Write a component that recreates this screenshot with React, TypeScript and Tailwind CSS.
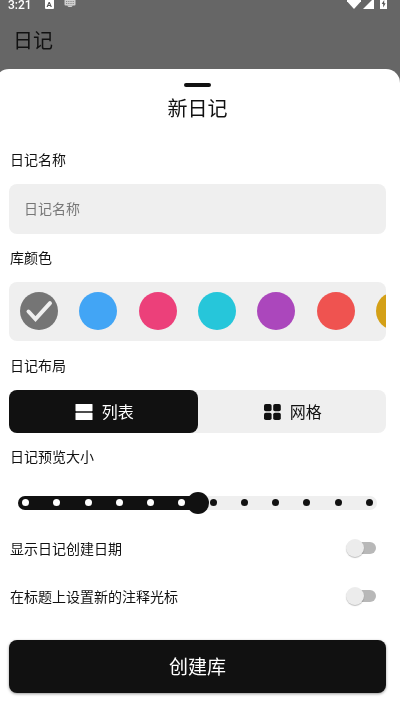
import React, { useState } from "react";

interface IColor {
  name: string;
  style: string;
}

const colors: IColor[] = [
  { name: "灰色", style: "bg-[#757575]" },
  { name: "蓝色", style: "bg-[#42a5f5]" },
  { name: "粉色", style: "bg-[#ec407a]" },
  { name: "青色", style: "bg-[#26c6da]" },
  { name: "紫色", style: "bg-[#ab47bc]" },
  { name: "红色", style: "bg-[#ef5350]" },
  { name: "琥珀色", style: "bg-[#d4a017]" },
];

const SLIDER_MAX = 11;

const StatusBar = () => {
  return (
    <div className="flex h-[10px] items-start justify-between pl-2 pr-[13px] text-white">
      <div className="flex items-start">
        <span className="font-[Roboto,sans-serif] text-xs font-medium leading-[11px]">
          3:21
        </span>
        <span className="ml-[13px] flex h-[9px] w-[9px] items-center justify-center rounded-b-[1px] bg-white font-[Roboto,sans-serif] text-[8px] font-bold leading-none text-[#555555]">
          A
        </span>
        <svg className="ml-[10px]" width="12" height="8" viewBox="0 0 12 8">
          <rect x="0.5" y="-1" width="11" height="6.5" rx="1" fill="#d0d0d0" />
          <path
            d="M2 1.5h8M2 3.5h8"
            stroke="#777777"
            strokeWidth="0.8"
            strokeDasharray="1 0.8"
          />
          <path d="M3 5.5h6l-1.5 1.5h-3z" fill="#d0d0d0" />
        </svg>
      </div>
      <div className="flex items-start">
        <svg width="14" height="9" viewBox="0 0 14 9" fill="white">
          <path d="M0 1.2V0h14v1.2L7 9z" />
        </svg>
        <svg className="ml-[2px]" width="11" height="9" viewBox="0 0 11 9" fill="white">
          <path d="M11 -2v11H0z" />
        </svg>
        <svg className="ml-[6px]" width="7" height="9" viewBox="0 0 7 9">
          <path d="M0 0h7v9H0z" fill="white" />
          <path d="M4.2 0L1.7 4h1.5v3.4l2.4-4.2H4.2z" fill="#555555" />
        </svg>
      </div>
    </div>
  );
};

const ListIcon = () => (
  <svg width="18" height="16" viewBox="0 0 18 16" fill="currentColor">
    <rect x="0.5" width="17" height="7.2" rx="0.6" />
    <rect x="0.5" y="8.8" width="17" height="7.2" rx="0.6" />
  </svg>
);

const GridIcon = () => (
  <svg width="17" height="16" viewBox="0 0 17 16" fill="currentColor">
    <rect width="7.6" height="7.2" rx="1.8" />
    <rect x="9.2" width="7.6" height="7.2" rx="1.8" />
    <rect y="8.8" width="7.6" height="7.2" rx="1.8" />
    <rect x="9.2" y="8.8" width="7.6" height="7.2" rx="1.8" />
  </svg>
);

const ColorPicker = () => {
  const [selected, setSelected] = useState(0);

  return (
    <fieldset className="min-w-0">
      <legend className="flex h-12 items-center pb-[2px] pl-px text-sm">库颜色</legend>
      <div className="overflow-x-auto rounded-lg bg-[#efefef] pb-[11px] pl-[11px] pt-[10px] [scrollbar-width:none]">
        <div className="flex w-[394px] justify-between">
          {colors.map((color, i) => (
            <label key={color.name} className="relative block size-[38px]">
              <input
                type="radio"
                name="color"
                aria-label={color.name}
                checked={selected === i}
                onChange={() => setSelected(i)}
                className={`block size-[38px] appearance-none rounded-full ${color.style}`}
              />
              {selected === i && (
                <svg
                  className="pointer-events-none absolute inset-0"
                  viewBox="0 0 38 38"
                  fill="none"
                >
                  <path
                    d="M8.5 19.5l7 7.5L30 11.2"
                    stroke="#efefef"
                    strokeWidth="4"
                    strokeLinecap="round"
                  />
                </svg>
              )}
            </label>
          ))}
        </div>
      </div>
    </fieldset>
  );
};

const LayoutTabs = () => {
  const [layout, setLayout] = useState("list");
  const tab = "flex h-[43px] items-center justify-center gap-[9px] rounded-lg pl-[2px] text-base";

  return (
    <div className="grid grid-cols-2 rounded-lg bg-[#efefef]">
      <button
        type="button"
        onClick={() => setLayout("list")}
        className={`${tab} ${layout === "list" ? "bg-[#111111] text-white" : ""}`}
      >
        <ListIcon />
        <span className="pb-[2px]">列表</span>
      </button>
      <button
        type="button"
        onClick={() => setLayout("grid")}
        className={`${tab} ${layout === "grid" ? "bg-[#111111] text-white" : ""}`}
      >
        <GridIcon />
        <span className="pb-[2px]">网格</span>
      </button>
    </div>
  );
};

const SizeSlider = () => {
  const [size, setSize] = useState(5.5);
  const dots = Array.from({ length: SLIDER_MAX + 1 }, (_, i) => i);

  return (
    <div className="flex h-[43px] items-center px-[9px]">
      <div className="relative h-[14px] w-full rounded-full bg-[#efefef]">
        <div
          className="h-full rounded-full bg-[#111111]"
          style={{ width: `${(size / SLIDER_MAX) * 100}%` }}
        />
        <div className="absolute inset-0 flex items-center justify-between px-1">
          {dots.map((dot) => (
            <span
              key={dot}
              className={`size-[7px] rounded-full ${dot < size ? "bg-white" : "bg-[#111111]"}`}
            />
          ))}
        </div>
        {/* wider than the track so the thumb can reach the outer dots */}
        <input
          id="size"
          type="range"
          min={0}
          max={SLIDER_MAX}
          step={0.5}
          value={size}
          onChange={(e) => setSize(Number(e.target.value))}
          className="absolute -inset-x-1 -inset-y-1 appearance-none bg-transparent [&::-webkit-slider-thumb]:size-[22px] [&::-webkit-slider-thumb]:appearance-none [&::-webkit-slider-thumb]:rounded-full [&::-webkit-slider-thumb]:bg-[#111111]"
        />
      </div>
    </div>
  );
};

const Toggle = ({ text }: { text: string }) => {
  return (
    <label className="flex h-12 items-center justify-between pl-px pr-[10px] text-sm">
      {text}
      <input
        type="checkbox"
        role="switch"
        className="relative h-3 w-[26px] appearance-none rounded-full bg-[#b8b8b8] before:absolute before:-left-1 before:-top-[3px] before:size-[18px] before:rounded-full before:bg-[#ececec] before:shadow-[0_1px_1px_rgba(0,0,0,0.25)] checked:bg-[#777777] checked:before:left-3 checked:before:bg-[#111111]"
      />
    </label>
  );
};

const App = () => {
  return (
    <div className="min-h-screen overflow-x-hidden bg-[#666666] font-['Noto_Sans_CJK_SC',sans-serif] text-[#111111]">
      <header className="h-[69px]">
        <StatusBar />
        <h1 className="pl-[13px] pt-[15px] text-xl leading-[30px]">日记</h1>
      </header>
      <form
        onSubmit={(e) => e.preventDefault()}
        className="-ml-[5px] rounded-t-[14px] bg-white px-[14px] pb-[15px] pt-[14px]"
      >
        <div className="mx-auto h-1 w-[27px] rounded-full bg-[#111111]" />
        <h2 className="pb-[13px] pt-[6px] text-center text-xl leading-[30px]">新日记</h2>

        <label htmlFor="name" className="flex h-12 items-center pb-[2px] pl-px text-sm">
          日记名称
        </label>
        <input
          id="name"
          type="text"
          placeholder="日记名称"
          className="block h-[50px] w-full rounded-lg bg-[#efefef] px-[15px] pb-[2px] text-sm placeholder:text-[#777777]"
        />

        <ColorPicker />

        <h3 className="flex h-[49px] items-center pb-[2px] pl-px text-sm">日记布局</h3>
        <LayoutTabs />

        <label htmlFor="size" className="flex h-12 items-center pb-[2px] pl-px text-sm">
          日记预览大小
        </label>
        <SizeSlider />

        <Toggle text="显示日记创建日期" />
        <Toggle text="在标题上设置新的注释光标" />

        <button
          type="submit"
          className="mt-5 h-[53px] w-full rounded-lg bg-[#111111] text-[19px] text-white shadow-[0_1px_3px_rgba(0,0,0,0.4)]"
        >
          创建库
        </button>
      </form>
    </div>
  );
};

export default App;
